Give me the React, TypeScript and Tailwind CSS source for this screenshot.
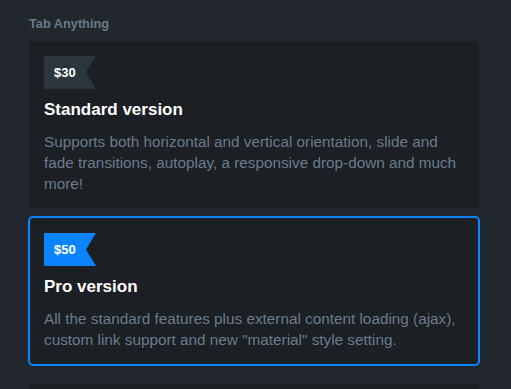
import React from 'react';

type Plan = {
  price: string;
  title: string;
  desc: string;
  selected?: boolean;
};

const plans: Plan[] = [
  {
    price: '$30',
    title: 'Standard version',
    desc: 'Supports both horizontal and vertical orientation, slide and fade transitions, autoplay, a responsive drop-down and much more!',
  },
  {
    price: '$50',
    title: 'Pro version',
    desc: 'All the standard features plus external content loading (ajax), custom link support and new "material" style setting.',
    selected: true,
  },
];

const PriceTag: React.FC<{ price: string; active?: boolean }> = ({ price, active }) => (
  <div
    className={`h-[33px] w-[52px] pl-[10px] flex items-center text-[13px] font-bold text-white [clip-path:polygon(0_0,100%_0,80.8%_50%,100%_100%,0_100%)] ${
      active ? 'bg-[#0a84ff]' : 'bg-[#2b353e]'
    }`}
  >
    {price}
  </div>
);

const App: React.FC = () => {
  return (
    <div className="w-[511px] h-[389px] overflow-hidden bg-[#22272e] font-['Liberation_Sans',Arial,sans-serif]">
      <div className="w-[452px] ml-[28px] pt-[16px]">
        <div className="pl-px text-[12.75px] font-bold text-[#68798b] leading-[16px]">Tab Anything</div>

        <div className="mt-[9px] flex flex-col">
          {plans.map((plan) => (
            <div
              key={plan.price}
              className={
                plan.selected
                  ? 'mt-[8px] rounded-[5px] border-2 border-[#0a84ff] bg-[#1c1f23] px-[14px] pt-[15px] pb-[14px]'
                  : 'mx-px w-[450px] rounded-[4px] bg-[#1c1f23] px-[15px] pt-[15px] pb-[14px]'
              }
            >
              <PriceTag price={plan.price} active={plan.selected} />
              <h3 className="mt-[9px] text-[17px] leading-[24px] font-bold text-white">{plan.title}</h3>
              <p className="mt-[9px] text-[15.3px] leading-[21px] text-[#6a7b8d]">{plan.desc}</p>
            </div>
          ))}
          <div className="mt-[18px] mx-px h-[40px] rounded-[4px] bg-[#1c1f23]" />
        </div>
      </div>
    </div>
  );
};

export default App;
